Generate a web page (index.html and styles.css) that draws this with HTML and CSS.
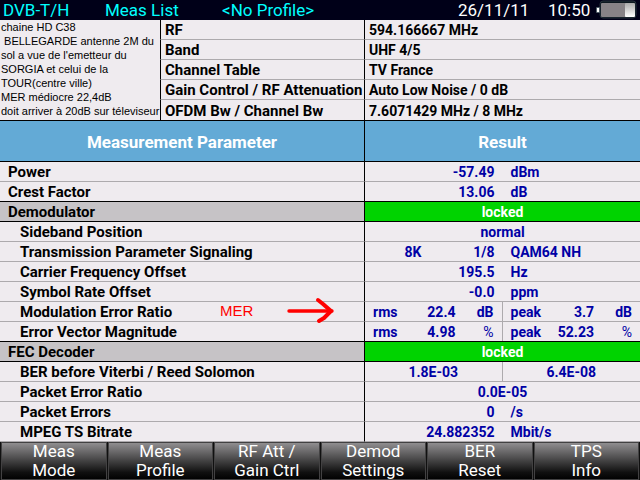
FILE: index.html
```
<!DOCTYPE html>
<html lang="en">
<head>
    <meta charset="UTF-8">
    <meta name="viewport" content="width=device-width, initial-scale=1.0">
    <title>DVB-T/H Meas List</title>
    <link rel="stylesheet" href="styles.css">
</head>
<body>
    <header class="status-bar">
        <span class="mode">DVB-T/H</span>
        <span class="view">Meas List</span>
        <span class="profile">&lt;No Profile&gt;</span>
        <span class="date">26/11/11</span>
        <span class="time">10:50</span>
        <svg class="battery" width="42" height="20" viewBox="0 0 42 20">
            <defs>
                <linearGradient id="charge" x1="0" y1="0" x2="0" y2="1">
                    <stop offset="0" stop-color="#aaa"/>
                    <stop offset="1" stop-color="#fff"/>
                </linearGradient>
            </defs>
            <rect x="4" y="1" width="36" height="17" rx="3" fill="#0c1820" stroke="#24303a"/>
            <rect x="0" y="7" width="4" height="6" rx="1" fill="#52606a"/>
            <rect x="1" y="8" width="2" height="4" fill="#fff"/>
            <rect x="5" y="3" width="26" height="14" rx="1" fill="#878387"/>
            <rect x="29" y="3" width="10" height="14" rx="1" fill="url(#charge)"/>
        </svg>
    </header>
    <section class="info">
        <p class="note">chaine HD C38<br>&nbsp;BELLEGARDE antenne 2M du<br>sol a vue de l'emetteur du<br>SORGIA et celui de la<br>TOUR(centre ville)<br>MER médiocre 22,4dB<br>doit arriver à 20dB sur téleviseur</p>
        <table class="settings">
            <tr><th scope="row">RF</th><td>594.166667 MHz</td></tr>
            <tr><th scope="row">Band</th><td>UHF 4/5</td></tr>
            <tr><th scope="row">Channel Table</th><td>TV France</td></tr>
            <tr><th scope="row">Gain Control / RF Attenuation</th><td>Auto Low Noise / 0 dB</td></tr>
            <tr><th scope="row">OFDM Bw / Channel Bw</th><td>7.6071429 MHz / 8 MHz</td></tr>
        </table>
    </section>
    <table class="results">
        <thead>
            <tr><th scope="col">Measurement Parameter</th><th scope="col">Result</th></tr>
        </thead>
        <tbody>
            <tr>
                <th scope="row">Power</th>
                <td><div class="pair"><span>-57.49</span><span>dBm</span></div></td>
            </tr>
            <tr class="last">
                <th scope="row">Crest Factor</th>
                <td><div class="pair"><span>13.06</span><span>dB</span></div></td>
            </tr>
        </tbody>
        <tbody>
            <tr class="group"><th scope="row">Demodulator</th><td>locked</td></tr>
            <tr class="sub"><th scope="row">Sideband Position</th><td>normal</td></tr>
            <tr class="sub">
                <th scope="row">Transmission Parameter Signaling</th>
                <td><div class="pair"><span class="tps"><span>8K</span><span>1/8</span></span><span>QAM64 NH</span></div></td>
            </tr>
            <tr class="sub">
                <th scope="row">Carrier Frequency Offset</th>
                <td><div class="pair"><span>195.5</span><span>Hz</span></div></td>
            </tr>
            <tr class="sub">
                <th scope="row">Symbol Rate Offset</th>
                <td><div class="pair"><span>-0.0</span><span>ppm</span></div></td>
            </tr>
            <tr class="sub">
                <th scope="row" class="marked">Modulation Error Ratio
                    <span class="marker">MER
                        <svg width="48" height="28" viewBox="0 0 48 28" fill="none" stroke="#f00" stroke-linecap="round" stroke-linejoin="round">
                            <path stroke-width="3.4" d="M2 14H45"/>
                            <path stroke-width="4" d="M31 3L36 7L44 14L37 21L32 24"/>
                        </svg>
                    </span>
                </th>
                <td>
                    <div class="split">
                        <div class="reading"><span>rms</span><span>22.4</span><span>dB</span></div>
                        <div class="reading"><span>peak</span><span>3.7</span><span>dB</span></div>
                    </div>
                </td>
            </tr>
            <tr class="sub last">
                <th scope="row">Error Vector Magnitude</th>
                <td>
                    <div class="split">
                        <div class="reading"><span>rms</span><span>4.98</span><span class="percent">%</span></div>
                        <div class="reading"><span>peak</span><span>52.23</span><span class="percent">%</span></div>
                    </div>
                </td>
            </tr>
        </tbody>
        <tbody>
            <tr class="group"><th scope="row">FEC Decoder</th><td>locked</td></tr>
            <tr class="sub">
                <th scope="row">BER before Viterbi / Reed Solomon</th>
                <td><div class="split"><div>1.8E-03</div><div>6.4E-08</div></div></td>
            </tr>
            <tr class="sub"><th scope="row">Packet Error Ratio</th><td>0.0E-05</td></tr>
            <tr class="sub">
                <th scope="row">Packet Errors</th>
                <td><div class="pair"><span>0</span><span>/s</span></div></td>
            </tr>
            <tr class="sub">
                <th scope="row">MPEG TS Bitrate</th>
                <td><div class="pair"><span>24.882352</span><span>Mbit/s</span></div></td>
            </tr>
        </tbody>
    </table>
    <nav class="softkeys">
        <button type="button">Meas<br>Mode</button>
        <button type="button">Meas<br>Profile</button>
        <button type="button">RF Att /<br>Gain Ctrl</button>
        <button type="button">Demod<br>Settings</button>
        <button type="button">BER<br>Reset</button>
        <button type="button">TPS<br>Info</button>
    </nav>
</body>
</html>
```
FILE: styles.css
```
* {
    box-sizing: border-box;
}
body {
    margin: 0;
    background-color: #efebef;
    color: #000;
    font-family: Roboto, sans-serif;
    font-size: 15px;
    line-height: 18px;
}
table {
    width: 100%;
    border-collapse: separate;
    border-spacing: 0;
    table-layout: fixed;
}
th, td {
    height: 20px;
    padding: 1px 0 0;
    border-bottom: 1px solid #adaaad;
    font-weight: bold;
    text-align: left;
    white-space: nowrap;
}
td {
    font-size: 14px;
}

/* top bar */
.status-bar {
    display: grid;
    grid-template-columns: 102px 117px 1fr 90px 48px 44px;
    height: 20px;
    padding-left: 3px;
    background-color: #000018;
    color: #fff;
    font-size: 17px;
    line-height: 20px;
    white-space: nowrap;
}
.mode, .view, .profile {
    color: #0ff;
}

/* channel settings */
.info {
    display: grid;
    grid-template-columns: 25% 1fr;
    border-bottom: 1px solid #000;
}
.note {
    margin: 0;
    padding: 0 0 0 1px;
    font-family: "Liberation Sans", Arial, sans-serif;
    font-size: 11px;
    line-height: 14px;
    white-space: nowrap;
}
.settings th, .settings td {
    padding-left: 4px;
    border-left: 1px solid #000;
}
.settings td {
    width: 276px;
}
.settings tr:last-child > * {
    border-bottom: none;
}

/* measurement list */
.results td, .results thead th:last-child {
    width: 276px;
    border-left: 1px solid #000;
}
.results td {
    color: #0000a5;
    text-align: center;
}
.results thead th {
    height: 41px;
    background-color: #63aad6;
    border-bottom-color: #000;
    color: #fff;
    font-size: 17px;
    text-align: center;
}
.results tbody th {
    padding-left: 8px;
}
.results .sub th {
    padding-left: 20px;
}
.results .last > *, .results .group > * {
    border-bottom-color: #000;
}
.results .group th {
    background-color: #c6c3c6;
}
.results .group td {
    background-color: #00d300;
    color: #fff;
}
.pair, .split {
    display: grid;
    grid-template-columns: 1fr 1fr;
}
.pair > * {
    padding: 0 8px;
    text-align: left;
}
.pair > :first-child {
    text-align: right;
}
/* lets the divider reach the row line above */
.split {
    margin-top: -1px;
}
.split > * {
    padding-top: 1px;
}
.split > :first-child {
    border-right: 1px solid #adaaad;
}
.tps {
    display: grid;
    grid-template-columns: 1fr 73px;
}
.reading {
    display: grid;
    grid-template-columns: 32px 1fr 38px;
    padding-left: 8px;
    padding-right: 8px;
    text-align: right;
}
.reading > :first-child {
    text-align: left;
}
.percent {
    font-weight: normal;
}
.marked {
    position: relative;
}
.marker {
    position: absolute;
    top: -5px;
    left: 220px;
    display: flex;
    align-items: center;
    gap: 34px;
    color: #f00;
    font-family: "Liberation Sans", Arial, sans-serif;
    font-weight: normal;
}

/* soft keys */
.softkeys {
    display: grid;
    grid-template-columns: repeat(6, 1fr);
    gap: 1px;
    padding: 0 1px;
    background-color: #101010;
}
.softkeys button {
    padding: 0;
    border: none;
    background: linear-gradient(#949294, #101010 80%, #000);
    box-shadow: inset 0 0 0 1px #424142;
    color: #fff;
    font-family: inherit;
    font-size: 17px;
    line-height: 19px;
}
```
